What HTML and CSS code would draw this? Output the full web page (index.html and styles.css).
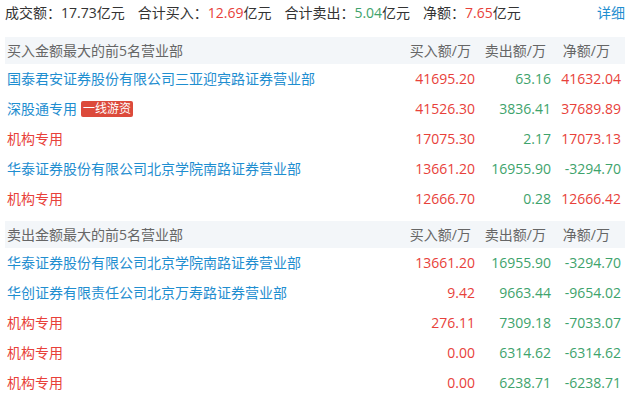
FILE: index.html
```html
<!DOCTYPE html>
<html lang="zh-CN">
<head>
<meta charset="utf-8">
<link rel="stylesheet" href="styles.css">
</head>
<body>
<div class="page">
  <div class="summary">
    <span class="item">成交额：<span class="dark">17.73</span>亿元</span>
    <span class="item">合计买入：<span class="red">12.69</span>亿元</span>
    <span class="item">合计卖出：<span class="green">5.04</span>亿元</span>
    <span class="item">净额：<span class="red">7.65</span>亿元</span>
    <a class="more">详细</a>
  </div>

  <div class="table">
    <div class="head">
      <span class="name">买入金额最大的前5名营业部</span>
      <span class="c1">买入额/万</span>
      <span class="c2">卖出额/万</span>
      <span class="c3">净额/万</span>
    </div>
    <div class="row">
      <span class="name blue">国泰君安证券股份有限公司三亚迎宾路证券营业部</span>
      <span class="n1 red">41695.20</span><span class="n2 green">63.16</span><span class="n3 red">41632.04</span>
    </div>
    <div class="row">
      <span class="name blue">深股通专用<span class="tag">一线游资</span></span>
      <span class="n1 red">41526.30</span><span class="n2 green">3836.41</span><span class="n3 red">37689.89</span>
    </div>
    <div class="row">
      <span class="name red">机构专用</span>
      <span class="n1 red">17075.30</span><span class="n2 green">2.17</span><span class="n3 red">17073.13</span>
    </div>
    <div class="row">
      <span class="name blue">华泰证券股份有限公司北京学院南路证券营业部</span>
      <span class="n1 red">13661.20</span><span class="n2 green">16955.90</span><span class="n3 green">-3294.70</span>
    </div>
    <div class="row">
      <span class="name red">机构专用</span>
      <span class="n1 red">12666.70</span><span class="n2 green">0.28</span><span class="n3 red">12666.42</span>
    </div>
  </div>

  <div class="table second">
    <div class="head">
      <span class="name">卖出金额最大的前5名营业部</span>
      <span class="c1">买入额/万</span>
      <span class="c2">卖出额/万</span>
      <span class="c3">净额/万</span>
    </div>
    <div class="row">
      <span class="name blue">华泰证券股份有限公司北京学院南路证券营业部</span>
      <span class="n1 red">13661.20</span><span class="n2 green">16955.90</span><span class="n3 green">-3294.70</span>
    </div>
    <div class="row">
      <span class="name blue">华创证券有限责任公司北京万寿路证券营业部</span>
      <span class="n1 red">9.42</span><span class="n2 green">9663.44</span><span class="n3 green">-9654.02</span>
    </div>
    <div class="row">
      <span class="name red">机构专用</span>
      <span class="n1 red">276.11</span><span class="n2 green">7309.18</span><span class="n3 green">-7033.07</span>
    </div>
    <div class="row">
      <span class="name red">机构专用</span>
      <span class="n1 red">0.00</span><span class="n2 green">6314.62</span><span class="n3 green">-6314.62</span>
    </div>
    <div class="row">
      <span class="name red">机构专用</span>
      <span class="n1 red">0.00</span><span class="n2 green">6238.71</span><span class="n3 green">-6238.71</span>
    </div>
  </div>
</div>
</body>
</html>
```

FILE: styles.css
```css
html, body {
  margin: 0;
  padding: 0;
  background: #fff;
}
body {
  font-family: "Open Sans", "Noto Sans CJK SC", sans-serif;
  font-size: 14px;
  color: #333;
}
.page {
  width: 620px;
  margin-left: 5px;
}
.summary {
  display: flex;
  height: 26px;
  line-height: 26px;
  margin-bottom: 11px;
  white-space: nowrap;
}
.summary .item {
  margin-right: 13px;
}
.summary .more {
  margin-left: auto;
  color: #1f8ed0;
  cursor: pointer;
}
.dark { color: #333; }
.red { color: #e8413a; }
.green { color: #3ea36c; }
.blue { color: #1f8ed0; }

.table.second {
  margin-top: 7px;
}
.head {
  display: flex;
  height: 27px;
  line-height: 27px;
  background: #f3f6f9;
  color: #666;
  padding-left: 2px;
}
.row {
  display: flex;
  height: 30px;
  line-height: 30px;
  padding-left: 2px;
  white-space: nowrap;
}
.name {
  flex: 1;
  display: flex;
  align-items: center;
}
.c1, .c2, .c3, .n1, .n2, .n3 {
  text-align: right;
  box-sizing: border-box;
}
.c1, .n1 { width: 100px; }
.c2, .n2 { width: 76px; }
.c3, .n3 { width: 74px; }
.c1 { padding-right: 4px; }
.c2 { padding-right: 5px; }
.c3 { padding-right: 15px; }
.n3 { padding-right: 4px; }
.tag {
  display: inline-block;
  margin-left: 4px;
  height: 16px;
  line-height: 16px;
  padding: 0 2px;
  background: #dc4a3b;
  color: #fff;
  font-size: 12px;
  border-radius: 2px;
}
```
